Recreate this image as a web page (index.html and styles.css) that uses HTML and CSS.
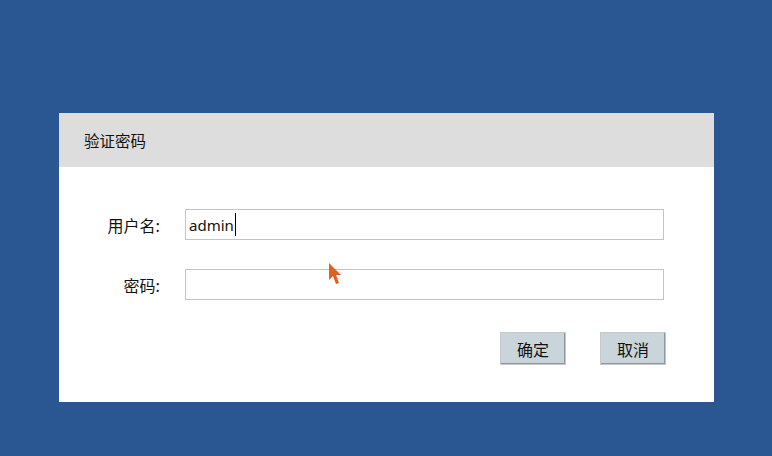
FILE: index.html
```html
<!DOCTYPE html>
<html lang="zh-CN">
<head>
    <meta charset="UTF-8">
    <title>验证密码</title>
    <link rel="stylesheet" href="styles.css">
</head>
<body>
    <div class="dialog">
        <div class="dialog-title">验证密码</div>
        <div class="dialog-body">
            <div class="row">
                <label class="label">用户名:</label>
                <div class="field"><span class="value">admin</span><span class="caret"></span></div>
            </div>
            <div class="row">
                <label class="label">密码:</label>
                <div class="field"></div>
            </div>
            <div class="actions">
                <button class="btn">确定</button>
                <button class="btn">取消</button>
            </div>
        </div>
        <svg class="pointer" width="14" height="22" viewBox="0 0 14 22">
            <path d="M0 0 L0 17 L4 13 L7 21 L10 20 L7 12 L12 12 Z" fill="#e0601f"/>
        </svg>
    </div>
</body>
</html>
```

FILE: styles.css
```css
body {
    margin: 0;
    background-color: #2a5792;
    font-family: "Noto Sans CJK SC", "Noto Sans", sans-serif;
    height: 456px;
    overflow: hidden;
}
.dialog {
    position: relative;
    margin: 113px 0 0 59px;
    width: 655px;
    height: 289px;
    background-color: #fff;
}
.dialog-title {
    height: 54px;
    line-height: 54px;
    padding-left: 25px;
    background-color: #dddddd;
    font-size: 15.5px;
    color: #111;
}
.dialog-body {
    padding: 42px 50px 0 0;
}
.row {
    display: flex;
    align-items: center;
    margin-bottom: 29px;
}
.label {
    width: 101px;
    text-align: right;
    margin-right: 25px;
    font-size: 16px;
    color: #111;
}
.field {
    flex: 1;
    height: 29px;
    border: 1px solid #c4c4c4;
    display: flex;
    align-items: center;
    padding-left: 3px;
}
.value {
    font-family: "Noto Sans", sans-serif;
    font-size: 15px;
    color: #111;
}
.caret {
    width: 1px;
    height: 23px;
    background-color: #000;
    margin-left: 1px;
}
.actions {
    display: flex;
    justify-content: flex-end;
    gap: 34px;
    margin-top: 32px;
    margin-right: -2px;
}
.btn {
    width: 66px;
    height: 33px;
    padding: 0;
    background-color: #c9d5db;
    border: 1px solid;
    border-color: #fff #4a5a66 #4a5a66 #fff;
    outline: 1px solid #c8c8c8;
    outline-offset: -1px;
    box-shadow: inset -1px -1px 0 #8a98a2;
    font-family: "Noto Sans CJK SC", sans-serif;
    font-size: 16px;
    color: #111;
}
.pointer {
    position: absolute;
    left: 270px;
    top: 150px;
}
```
